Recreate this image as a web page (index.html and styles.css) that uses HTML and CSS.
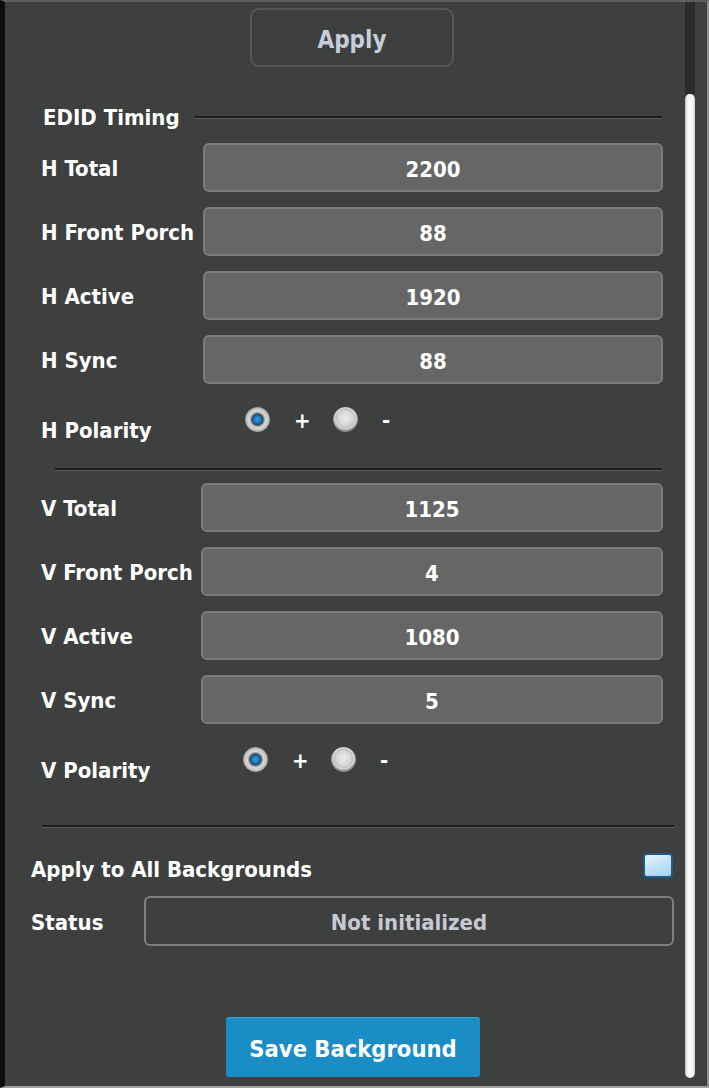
FILE: index.html
```html
<!DOCTYPE html>
<html lang="en">
<head>
<meta charset="utf-8">
<title>EDID Timing</title>
<link rel="stylesheet" href="styles.css">
</head>
<body>
<div class="window">
  <main class="panel">
    <div class="apply-row"><button class="btn-outline">Apply</button></div>

    <div class="group-title"><span class="group-name">EDID Timing</span><span class="rule"></span></div>

    <div class="fields">
      <div class="row"><span class="label">H Total</span><div class="field">2200</div></div>
      <div class="row"><span class="label">H Front Porch</span><div class="field">88</div></div>
      <div class="row"><span class="label">H Active</span><div class="field">1920</div></div>
      <div class="row"><span class="label">H Sync</span><div class="field">88</div></div>
    </div>
    <div class="polarity">
      <span class="label">H Polarity</span>
      <div class="radios">
        <span class="radio checked"></span><span class="sign plus">+</span>
        <span class="radio"></span><span class="sign minus">-</span>
      </div>
    </div>

    <div class="sep sep-mid"></div>

    <div class="fields fields-v">
      <div class="row"><span class="label">V Total</span><div class="field">1125</div></div>
      <div class="row"><span class="label">V Front Porch</span><div class="field">4</div></div>
      <div class="row"><span class="label">V Active</span><div class="field">1080</div></div>
      <div class="row"><span class="label">V Sync</span><div class="field">5</div></div>
    </div>
    <div class="polarity polarity-v">
      <span class="label">V Polarity</span>
      <div class="radios">
        <span class="radio checked"></span><span class="sign plus">+</span>
        <span class="radio"></span><span class="sign minus">-</span>
      </div>
    </div>

    <div class="sep sep-wide"></div>

    <div class="check-row">
      <span class="label">Apply to All Backgrounds</span>
      <span class="checkbox"></span>
    </div>
    <div class="status-row">
      <span class="label">Status</span>
      <div class="status">Not initialized</div>
    </div>

    <div class="save-row"><button class="btn-primary">Save Background</button></div>
  </main>
  <div class="scrollbar"><div class="track-top"></div><div class="thumb"></div></div>
</div>
</body>
</html>
```

FILE: styles.css
```css
* { box-sizing: border-box; }

html, body {
  margin: 0;
  padding: 0;
  background: #3e3f3f;
}

body {
  font-family: "DejaVu Sans Condensed", "DejaVu Sans", sans-serif;
  font-stretch: condensed;
  font-weight: bold;
  font-size: 22px;
  color: #ffffff;
}

.window {
  width: 709px;
  height: 1088px;
  display: flex;
  background: #3e3f3f;
  border-left: 5px solid #0d0d0d;
  border-top: 2px solid #5e5f5f;
  border-right: 2px solid #8f9090;
  border-bottom: 2px solid #a0a0a0;
  overflow: hidden;
}

.panel {
  width: 680px;
  display: flex;
  flex-direction: column;
}

/* top action */
.apply-row {
  margin-top: 6px;
  padding-left: 245px;
}

.btn-outline {
  width: 204px;
  height: 59px;
  border: 2px solid #565757;
  border-radius: 9px;
  background: transparent;
  color: #c7cedb;
  font: inherit;
  font-stretch: condensed;
  font-size: 24px;
  padding: 4px 0 0;
}

/* section heading with trailing rule */
.group-title {
  margin-top: 38px;
  height: 24px;
  display: flex;
  align-items: center;
  padding-left: 38px;
  padding-right: 23px;
  line-height: 24px;
}

.group-name { width: 152px; white-space: nowrap; padding-top: 2px; }

.rule {
  flex: 1;
  height: 3px;
  border-top: 2px solid #1b1c1c;
  border-bottom: 1px solid #5c5d5d;
}

/* label + value rows */
.fields {
  margin-top: 14px;
  display: flex;
  flex-direction: column;
  gap: 15px;
  padding-left: 36px;
}

.fields-v { margin-top: 12px; }

.row {
  display: flex;
  align-items: center;
  height: 49px;
}

.label {
  white-space: nowrap;
  line-height: 24px;
}

.row .label { width: 162px; padding-top: 3px; }
.fields-v .row .label { width: 160px; }

.field {
  height: 49px;
  display: flex;
  align-items: center;
  justify-content: center;
  padding-top: 3px;
  background: #666666;
  border: 2px solid #7b7c7c;
  border-radius: 6px;
}

.row .field { width: 460px; }
.fields-v .row .field { width: 462px; }

/* polarity radios */
.polarity {
  margin-top: 23px;
  height: 35px;
  display: flex;
  align-items: flex-start;
  padding-left: 36px;
}

.polarity .label {
  width: 204px;
  margin-top: 12px;
}

.polarity-v .label { width: 202px; }

.radios {
  display: flex;
  align-items: center;
  height: 25px;
}

.radio {
  width: 25px;
  height: 25px;
  border-radius: 50%;
  background: radial-gradient(circle at 50% 45%, #ececec 0, #d8d8d8 7px, #c2c2c2 9px, #d6d6d6 10.5px, #b4b4b4 11.5px, #8c8c8c 12.5px);
}

.radio.checked {
  background: radial-gradient(circle at 50% 50%, #3aa3e6 0, #1778bf 3.5px, #0e4f82 5px, #6b6b6b 6px, #9a9a9a 6.8px, #d6d6d6 8px, #c9c9c9 10.5px, #b0b0b0 11.5px, #8c8c8c 12.5px);
}

.sign {
  line-height: 24px;
  text-align: center;
  padding-top: 2px;
}

.plus { margin: 0 23px 0 24px; width: 16px; }
.minus { margin-left: 23px; width: 10px; }

/* separators */
.sep {
  height: 3px;
  border-top: 2px solid #1c1d1d;
  border-bottom: 1px solid #5c5d5d;
}

.sep-mid {
  margin: 26px 23px 0 50px;
}

.sep-wide {
  margin: 43px 11px 0 37px;
}

/* options */
.check-row {
  margin-top: 25px;
  height: 27px;
  display: flex;
  align-items: flex-start;
  justify-content: space-between;
  padding-left: 26px;
  padding-right: 12px;
}

.check-row .label { margin-top: 3px; padding-top: 2px; }

.checkbox {
  width: 30px;
  height: 25px;
  border: 2px solid #1d5c88;
  border-radius: 4px;
  background: linear-gradient(160deg, #e4f3fd 0%, #c2e2f8 50%, #a6d2f2 100%);
}

.status-row {
  margin-top: 16px;
  display: flex;
  align-items: center;
  padding-left: 26px;
}

.status-row .label { width: 113px; padding-top: 3px; }

.status {
  width: 530px;
  height: 50px;
  display: flex;
  align-items: center;
  justify-content: center;
  padding-top: 2px;
  border: 2px solid #7e7f7f;
  border-radius: 6px;
  color: #c5c9d1;
}

/* bottom action */
.save-row {
  margin-top: 71px;
  padding-left: 221px;
}

.btn-primary {
  width: 254px;
  height: 60px;
  border: none;
  border-top: 1px solid #3ea3d9;
  border-radius: 3px;
  background: #1a8cc6;
  color: #ffffff;
  font: inherit;
  font-stretch: condensed;
  font-size: 23.5px;
  padding: 3px 0 0;
}

/* scrollbar */
.scrollbar {
  width: 10px;
  display: flex;
  flex-direction: column;
  margin-right: 12px;
}

.track-top {
  height: 92px;
  background: #2a2b2b;
}

.thumb {
  height: 984px;
  border-radius: 5px;
  background: linear-gradient(90deg, #bdbdbd 0%, #f2f2f2 25%, #ffffff 50%, #f2f2f2 80%, #c9c9c9 100%);
}
```
